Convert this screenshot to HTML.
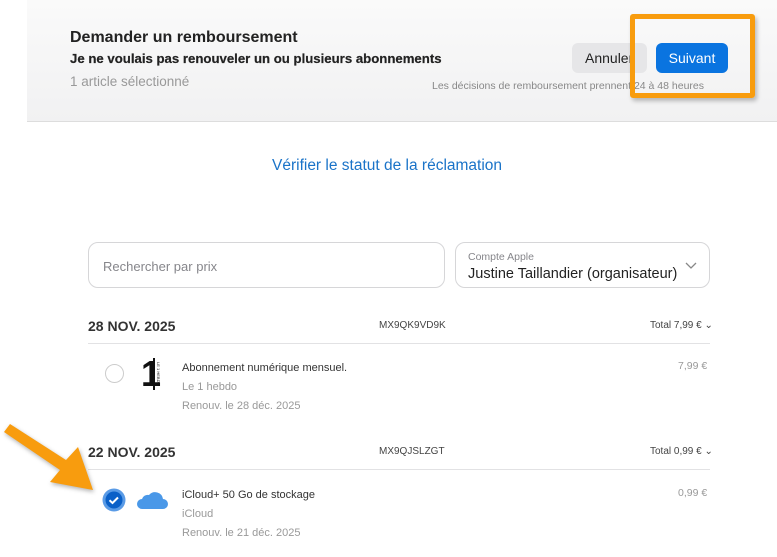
<!DOCTYPE html>
<html><head><meta charset="utf-8"><style>
body{margin:0;width:777px;height:557px;background:#fff;position:relative;overflow:hidden;font-family:"Liberation Sans",sans-serif;color:#1d1d1f}
.a{position:absolute;white-space:nowrap}
.g{color:#86868b}
.line{position:absolute;height:1px;background:#e2e2e4;left:88px;width:622px}
</style></head><body>
<div class="a" style="left:27px;top:0;width:750px;height:121px;background:linear-gradient(#fafafa,#f1f1f2);border-bottom:1px solid #ddd"></div>
<div class="a" style="left:70px;top:29px;font-size:16px;font-weight:bold;color:#222">Demander un remboursement</div>
<div class="a" style="left:70px;top:51px;font-size:13.2px;font-weight:600;color:#222;-webkit-text-stroke:0.2px #222">Je ne voulais pas renouveler un ou plusieurs abonnements</div>
<div class="a g" style="left:70px;top:74px;font-size:13.5px;color:#999">1 article sélectionné</div>
<div class="a" style="left:572px;top:43px;width:75px;height:30px;background:#e6e6e8;border-radius:6px;font-size:14px;line-height:30px;padding-left:13px;box-sizing:border-box;color:#222">Annuler</div>
<div class="a" style="left:656px;top:43px;width:72px;height:30px;background:#0a74e0;border-radius:6px;font-size:14px;line-height:30px;text-align:center;color:#fff">Suivant</div>
<div class="a" style="left:432px;top:80px;font-size:10.5px;color:#888">Les décisions de remboursement prennent 24 à 48 heures</div>
<div class="a" style="left:630px;top:14px;width:115px;height:74px;border:5px solid #f89c0e;border-radius:3px;box-shadow:2px 3px 4px rgba(0,0,0,.25)"></div>
<div class="a" style="left:272px;top:157px;font-size:15.5px;color:#1a73c8">Vérifier le statut de la réclamation</div>
<div class="a" style="left:88px;top:242px;width:357px;height:46px;border:1px solid #d6d6d8;border-radius:10px;box-sizing:border-box"></div>
<div class="a g" style="left:103px;top:259px;font-size:13px">Rechercher par prix</div>
<div class="a" style="left:455px;top:242px;width:255px;height:46px;border:1px solid #d6d6d8;border-radius:10px;box-sizing:border-box"></div>
<div class="a g" style="left:468px;top:251px;font-size:10.5px">Compte Apple</div>
<div class="a" style="left:468px;top:266px;font-size:14.5px;color:#222">Justine Taillandier (organisateur)</div>
<svg class="a" style="left:685px;top:262px" width="12" height="8"><path d="M1 1l5 5 5-5" stroke="#888" fill="none" stroke-width="1.3"/></svg>
<div class="a" style="left:88px;top:318px;font-size:14px;font-weight:bold;color:#333">28 NOV. 2025</div>
<div class="a" style="left:379px;top:320px;font-size:10px;color:#444">MX9QK9VD9K</div>
<div class="a" style="left:650px;top:320px;font-size:10px;color:#444">Total 7,99 € ⌄</div>
<div class="line" style="top:343px"></div>
<div class="a" style="left:105px;top:364px;width:17px;height:17px;border:1px solid #ccc;border-radius:50%"></div>
<div class="a" style="left:141px;top:356px;font-size:36px;font-weight:bold;line-height:36px;color:#111">1</div>
<div class="a" style="left:153px;top:358px;width:2px;height:32px;background:#111"></div>
<div class="a" style="left:156px;top:362px;font-size:4px;writing-mode:vertical-rl;color:#111">LE 1 HEBDO</div>
<div class="a" style="left:182px;top:362px;font-size:11px;color:#333">Abonnement numérique mensuel.</div>
<div class="a g" style="left:182px;top:381px;font-size:11px;color:#999">Le 1 hebdo</div>
<div class="a g" style="left:182px;top:400px;font-size:11px;color:#999">Renouv. le 28 déc. 2025</div>
<div class="a" style="left:678px;top:360px;font-size:10.5px;color:#999">7,99 €</div>
<div class="a" style="left:88px;top:444px;font-size:14px;font-weight:bold;color:#333">22 NOV. 2025</div>
<div class="a" style="left:379px;top:446px;font-size:10px;color:#444">MX9QJSLZGT</div>
<div class="a" style="left:650px;top:446px;font-size:10px;color:#444">Total 0,99 € ⌄</div>
<div class="line" style="top:469px"></div>
<svg class="a" style="left:102px;top:488px" width="24" height="24"><circle cx="12" cy="12" r="11.5" fill="#5a9be6"/><circle cx="12" cy="12" r="8.5" fill="#0a60c8"/><path d="M7.5 12.3l3 2.7 5.5-5.5" stroke="#fff" stroke-width="2" fill="none"/></svg>
<svg class="a" style="left:136px;top:489px" width="32" height="22"><path d="M6 20a5 5 0 0 1 0-10a6 6 0 0 1 7-4a8 8 0 0 1 14 4a5 5 0 0 1 0 10z" fill="#4a98e8"/></svg>
<div class="a" style="left:182px;top:489px;font-size:11px;color:#333">iCloud+ 50 Go de stockage</div>
<div class="a" style="left:182px;top:508px;font-size:11px;color:#999">iCloud</div>
<div class="a" style="left:182px;top:527px;font-size:11px;color:#999">Renouv. le 21 déc. 2025</div>
<div class="a" style="left:678px;top:487px;font-size:10.5px;color:#999">0,99 €</div>
<svg class="a" style="left:0;top:420px" width="100" height="80"><g style="filter:drop-shadow(1px 2px 2px rgba(0,0,0,.3))"><path d="M4 12L10 4L66 40L78 27L93 70L50 62L60 50Z" fill="#f89c0e"/></g></svg>
</body></html>
